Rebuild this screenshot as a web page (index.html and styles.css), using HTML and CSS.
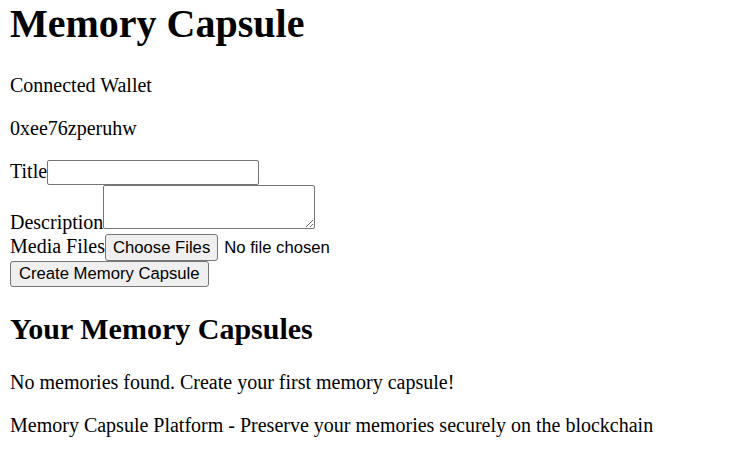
FILE: index.html
```html
<!DOCTYPE html>
<html lang="en">

<head>
  <meta charset="utf-8" />
  <title>Memory Capsule</title>
  <link rel="stylesheet" href="styles.css">
</head>

<body>
  <h1>Memory Capsule</h1>
  <p>Connected Wallet</p>
  <p>0xee76zperuhw</p>

  <form id="capsuleForm">
    <div class="row">
      <label for="title">Title</label><input type="text" id="title" name="title" />
    </div>
    <div class="row">
      <label for="description">Description</label><textarea id="description" name="description"></textarea>
    </div>
    <div class="row">
      <label for="media">Media Files</label><input type="file" id="media" name="media" multiple />
    </div>
    <div class="row">
      <button type="submit">Create Memory Capsule</button>
    </div>
  </form>

  <h2>Your Memory Capsules</h2>
  <p>No memories found. Create your first memory capsule!</p>

  <footer>
    <p>Memory Capsule Platform - Preserve your memories securely on the blockchain</p>
  </footer>
</body>

</html>
```

FILE: styles.css
```css
body {
  font-family: "Liberation Serif", "Times New Roman", serif;
  font-size: 20px;
  margin: 0 10px 10px;
  color: #000;
  background: #fff;
}

h1 {
  font-size: 40px;
  margin: 0 0 26.8px;
}

h2 {
  font-size: 30px;
  margin: 25px 0;
}

p {
  margin: 20px 0;
}

input[type="text"],
textarea {
  font-family: "Liberation Sans", Arial, sans-serif;
  font-size: 16.67px;
  box-sizing: border-box;
  width: 212px;
  border: 1px solid #767676;
  border-radius: 2px;
  padding: 1px 2px;
  margin: 0;
}

input[type="text"] {
  height: 25px;
}

textarea {
  height: 44px;
  resize: both;
}

input[type="file"],
button {
  font-family: "Liberation Sans", Arial, sans-serif;
  font-size: 16.67px;
  margin: 0;
}

input[type="file"]::file-selector-button {
  font: inherit;
  height: 27px;
  padding: 0 7px;
  margin-right: 6px;
  border: 1px solid #767676;
  border-radius: 3px;
  background: #efefef;
}

button {
  height: 26px;
  padding: 0 8px;
  border: 1px solid #767676;
  border-radius: 3px;
  background: #efefef;
  color: #000;
}
```
